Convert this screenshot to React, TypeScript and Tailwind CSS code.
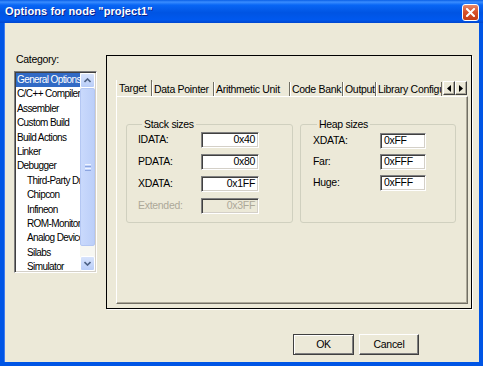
import React from "react";

const categories: Array<{ label: string; sub?: boolean }> = [
  { label: "General Options" },
  { label: "C/C++ Compiler" },
  { label: "Assembler" },
  { label: "Custom Build" },
  { label: "Build Actions" },
  { label: "Linker" },
  { label: "Debugger" },
  { label: "Third-Party Driver", sub: true },
  { label: "Chipcon", sub: true },
  { label: "Infineon", sub: true },
  { label: "ROM-Monitor", sub: true },
  { label: "Analog Devices", sub: true },
  { label: "Silabs", sub: true },
  { label: "Simulator", sub: true },
];

const tabs = [
  { label: "Target", w: "w-[36px]" },
  { label: "Data Pointer", w: "w-[62px]" },
  { label: "Arithmetic Unit", w: "w-[76px]" },
  { label: "Code Bank", w: "w-[53px]" },
  { label: "Output", w: "w-[33px]" },
  { label: "Library Configuration", w: "w-[66px]" },
];

const sunken =
  "border border-t-[#808080] border-l-[#808080] border-r-white border-b-white shadow-[inset_1px_1px_0_#404040,inset_-1px_-1px_0_#d4d0c8]";

function CloseButton() {
  return (
    <div className="mt-[1px] flex h-[17px] w-[17px] items-center justify-center rounded-[3px] border border-white bg-[linear-gradient(180deg,#e88a6c_0%,#d9532c_45%,#c43c16_100%)]">
      <svg width="9" height="9" viewBox="0 0 9 9">
        <path d="M1 1 L8 8 M8 1 L1 8" stroke="white" strokeWidth="2" strokeLinecap="square" />
      </svg>
    </div>
  );
}

function ScrollArrow({ up }: { up?: boolean }) {
  return (
    <div className="flex h-[15px] w-[15px] items-center justify-center rounded-[2px] border border-white bg-[linear-gradient(180deg,#d7e3fc,#b9cdf8)]">
      <svg width="7" height="5" viewBox="0 0 7 5">
        <path d={up ? "M0.5 4 L3.5 1 L6.5 4" : "M0.5 1 L3.5 4 L6.5 1"} stroke="#4d6185" strokeWidth="1.6" fill="none" />
      </svg>
    </div>
  );
}

function CategoryList() {
  return (
    <div className={`mt-[5px] flex h-[202px] bg-white p-[1px] ${sunken}`}>
      <div className="flex-1 overflow-hidden text-[10px] tracking-[-0.6px]">
        {categories.map((c, i) => (
          <div
            key={c.label}
            className={`h-[14.4px] overflow-hidden whitespace-nowrap leading-[14.4px] ${c.sub ? "pl-[11px]" : "pl-[1px]"} ${i === 0 ? "bg-[#316ac5] text-white" : "text-black"}`}
          >
            {c.label}
          </div>
        ))}
      </div>
      <div className="flex w-[15px] flex-col bg-[#f7f7f2]">
        <ScrollArrow up />
        <div className="flex h-[158px] items-center justify-center rounded-[2px] border border-[#b4c7f3] bg-[linear-gradient(90deg,#c9d9fc,#bccff9)]">
          <div className="flex flex-col gap-[1px]">
            <div className="h-[1px] w-[6px] bg-[#eef3ff]" />
            <div className="h-[1px] w-[6px] bg-[#8ca5e0]" />
            <div className="h-[1px] w-[6px] bg-[#eef3ff]" />
            <div className="h-[1px] w-[6px] bg-[#8ca5e0]" />
          </div>
        </div>
        <div className="flex-1" />
        <ScrollArrow />
      </div>
    </div>
  );
}

function Field({ value, align, disabled }: { value: string; align: "left" | "right"; disabled?: boolean }) {
  return (
    <div
      className={`flex h-[16px] items-center overflow-hidden whitespace-nowrap ${sunken} ${align === "right" ? "justify-end pr-[3px]" : "pl-[3px]"} ${disabled ? "bg-[#ece9d8] text-[#aca899]" : "bg-white text-black"}`}
    >
      {value}
    </div>
  );
}

function SpinButton({ left }: { left?: boolean }) {
  return (
    <div className="flex h-[14px] w-[12px] items-center justify-center border border-t-white border-l-white border-r-[#404040] border-b-[#404040] bg-[#ece9d8] shadow-[inset_-1px_-1px_0_#aca899]">
      <svg width="4" height="7" viewBox="0 0 4 7">
        <path d={left ? "M4 0 L0 3.5 L4 7 Z" : "M0 0 L4 3.5 L0 7 Z"} fill="black" />
      </svg>
    </div>
  );
}

export default function App() {
  return (
    <div className="flex h-[366px] w-[483px] flex-col bg-[#0055e5] font-['Liberation_Sans',Arial,sans-serif] text-[10.5px] tracking-[-0.3px] text-black">
      <div className="flex h-[23px] shrink-0 items-center justify-between bg-[linear-gradient(180deg,#0a5fe6_0%,#3a8dff_9%,#0866f5_22%,#0054e3_55%,#0058ee_85%,#0046cf_100%)] pl-[5px] pr-[4px]">
        <span className="text-[11px] font-bold tracking-[0.1px] text-white [text-shadow:1px_1px_0_#0c228a]">
          Options for node "project1"
        </span>
        <CloseButton />
      </div>

      <div className="mx-[4px] mb-[4px] flex h-[339px] flex-col bg-[#ece9d8] shadow-[inset_1px_0_0_#3d7bf0]">
        <div className="flex pl-[10px] pt-[29px]">
          <div className="w-[83px]">
            <div className="h-[14px] pl-[2px] leading-[14px]">Category:</div>
            <CategoryList />
          </div>

          <div className="ml-[9px] mt-[3px] flex h-[254px] w-[366px] flex-col border border-black pb-[4px] pl-[9px] pr-[3px] pt-[24px] shadow-[1px_1px_0_white]">
            <div className="flex h-[16px] items-stretch">
              {tabs.map((t, i) => (
                <div
                  key={t.label}
                  className={`${t.w} overflow-hidden whitespace-nowrap border-r border-r-[#716f64] pl-[2px] leading-[14px] ${i === 0 ? "border-l border-l-white pt-[1px]" : "mt-[2px] shadow-[inset_1px_0_0_white]"}`}
                >
                  {t.label}
                </div>
              ))}
              <div className="ml-auto mr-[1px] flex items-start pt-[1px]">
                <SpinButton left />
                <SpinButton />
              </div>
            </div>

            <div className="flex flex-1 gap-[7px] border border-b-[#716f64] border-l-white border-r-[#716f64] border-t-white pl-[9px] pt-[20px] shadow-[inset_-1px_-1px_0_#aca899]">
              <fieldset className="h-[106px] w-[167px] rounded-[3px] border border-[#d0d0bf] pl-[11px]">
                <legend className="ml-[4px] px-[2px] leading-[14px]">Stack sizes</legend>
                <div className="grid grid-cols-[63px_58px] items-center gap-y-[6px] pt-[1px]">
                  <span>IDATA:</span>
                  <Field value="0x40" align="right" />
                  <span>PDATA:</span>
                  <Field value="0x80" align="right" />
                  <span>XDATA:</span>
                  <Field value="0x1FF" align="right" />
                  <span className="text-[#aca899]">Extended:</span>
                  <Field value="0x3FF" align="right" disabled />
                </div>
              </fieldset>

              <fieldset className="h-[106px] w-[156px] rounded-[3px] border border-[#d0d0bf] pl-[12px]">
                <legend className="ml-[4px] px-[2px] leading-[14px]">Heap sizes</legend>
                <div className="grid grid-cols-[67px_46px] items-center gap-y-[5px] pt-[2px]">
                  <span>XDATA:</span>
                  <Field value="0xFF" align="left" />
                  <span>Far:</span>
                  <Field value="0xFFF" align="left" />
                  <span>Huge:</span>
                  <Field value="0xFFF" align="left" />
                </div>
              </fieldset>
            </div>
          </div>
        </div>

        <div className="mt-[25px] flex justify-end gap-[5px] pr-[60px]">
          <button
            type="button"
            className="h-[21px] w-[61px] border border-[#404040] bg-[#ece9d8] shadow-[inset_1px_1px_0_white,inset_-1px_-1px_0_#808080]"
          >
            OK
          </button>
          <button
            type="button"
            className="h-[21px] w-[60px] border border-b-[#404040] border-l-white border-r-[#404040] border-t-white bg-[#ece9d8] shadow-[inset_-1px_-1px_0_#808080]"
          >
            Cancel
          </button>
        </div>
      </div>
    </div>
  );
}
